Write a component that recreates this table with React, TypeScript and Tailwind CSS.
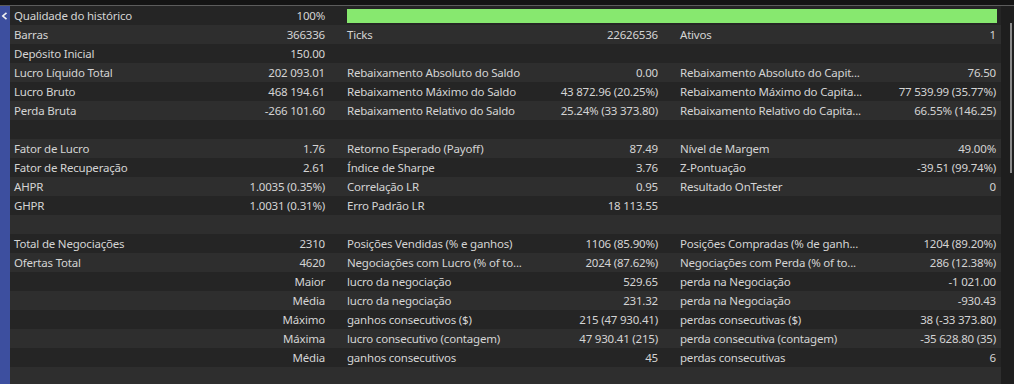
import React from 'react'

type Cell = [string, string] | null

type Row = {
  cells: [Cell, Cell, Cell]
  bar?: boolean
}

const rows: Row[] = [
  { cells: [['Qualidade do histórico', '100%'], null, null], bar: true },
  { cells: [['Barras', '366336'], ['Ticks', '22626536'], ['Ativos', '1']] },
  { cells: [['Depósito Inicial', '150.00'], null, null] },
  { cells: [['Lucro Líquido Total', '202 093.01'], ['Rebaixamento Absoluto do Saldo', '0.00'], ['Rebaixamento Absoluto do Capit...', '76.50']] },
  { cells: [['Lucro Bruto', '468 194.61'], ['Rebaixamento Máximo do Saldo', '43 872.96 (20.25%)'], ['Rebaixamento Máximo do Capita...', '77 539.99 (35.77%)']] },
  { cells: [['Perda Bruta', '-266 101.60'], ['Rebaixamento Relativo do Saldo', '25.24% (33 373.80)'], ['Rebaixamento Relativo do Capita...', '66.55% (146.25)']] },
  { cells: [null, null, null] },
  { cells: [['Fator de Lucro', '1.76'], ['Retorno Esperado (Payoff)', '87.49'], ['Nível de Margem', '49.00%']] },
  { cells: [['Fator de Recuperação', '2.61'], ['Índice de Sharpe', '3.76'], ['Z-Pontuação', '-39.51 (99.74%)']] },
  { cells: [['AHPR', '1.0035 (0.35%)'], ['Correlação LR', '0.95'], ['Resultado OnTester', '0']] },
  { cells: [['GHPR', '1.0031 (0.31%)'], ['Erro Padrão LR', '18 113.55'], null] },
  { cells: [null, null, null] },
  { cells: [['Total de Negociações', '2310'], ['Posições Vendidas (% e ganhos)', '1106 (85.90%)'], ['Posições Compradas (% de ganh...', '1204 (89.20%)']] },
  { cells: [['Ofertas Total', '4620'], ['Negociações com Lucro (% of to...', '2024 (87.62%)'], ['Negociações com Perda (% of to...', '286 (12.38%)']] },
  { cells: [['', 'Maior'], ['lucro da negociação', '529.65'], ['perda na Negociação', '-1 021.00']] },
  { cells: [['', 'Média'], ['lucro da negociação', '231.32'], ['perda na Negociação', '-930.43']] },
  { cells: [['', 'Máximo'], ['ganhos consecutivos ($)', '215 (47 930.41)'], ['perdas consecutivas ($)', '38 (-33 373.80)']] },
  { cells: [['', 'Máxima'], ['lucro consecutivo (contagem)', '47 930.41 (215)'], ['perda consecutiva (contagem)', '-35 628.80 (35)']] },
  { cells: [['', 'Média'], ['ganhos consecutivos', '45'], ['perdas consecutivas', '6']] },
]

const CellView = ({ cell, width }: { cell: Cell; width: string }) => (
  <div className={`flex ${width} shrink-0 items-center justify-between whitespace-nowrap`}>
    <span>{cell?.[0]}</span>
    <span>{cell?.[1]}</span>
  </div>
)

export default function App() {
  return (
    <div
      className="flex h-[384px] w-[1014px] flex-col overflow-hidden bg-[#2e2e2e] text-[11.5px] tracking-[-0.2px] text-[#d4d4d4]"
      style={{ fontFamily: '"Noto Sans", "Open Sans", sans-serif' }}
    >
      <div className="h-[6px] shrink-0 border-b border-[#5c5c5c] bg-[#141414]" />
      <div className="flex flex-1">
        <div className="relative w-[10px] shrink-0 bg-[#3d4f9f]">
          <svg className="absolute left-[1px] top-[6px]" width="7" height="8" viewBox="0 0 7 8">
            <path d="M5.5 0.8 L1.8 4 L5.5 7.2" fill="none" stroke="#f2f2f2" strokeWidth="1.6" />
          </svg>
        </div>
        <div className="flex flex-1 flex-col">
          {rows.map((row, i) => (
            <div
              key={i}
              className={`flex h-[19px] shrink-0 items-center pl-[4px] pr-[4px] ${i % 2 === 0 ? 'bg-[#252525]' : 'bg-[#2e2e2e]'}`}
            >
              <CellView cell={row.cells[0]} width="w-[311px]" />
              <div className="w-[22px] shrink-0" />
              {row.bar ? (
                <div className="h-[14px] w-[650px] shrink-0 bg-[#87e86f]" />
              ) : (
                <>
                  <CellView cell={row.cells[1]} width="w-[311px]" />
                  <div className="w-[22px] shrink-0" />
                  <CellView cell={row.cells[2]} width="w-[316px]" />
                </>
              )}
            </div>
          ))}
        </div>
        <div className="w-[14px] shrink-0 bg-[#1e1e1e] pl-[9px] pt-[17px]">
          <div className="h-[150px] w-[2px] bg-[#8c8c8c]" />
        </div>
      </div>
    </div>
  )
}
